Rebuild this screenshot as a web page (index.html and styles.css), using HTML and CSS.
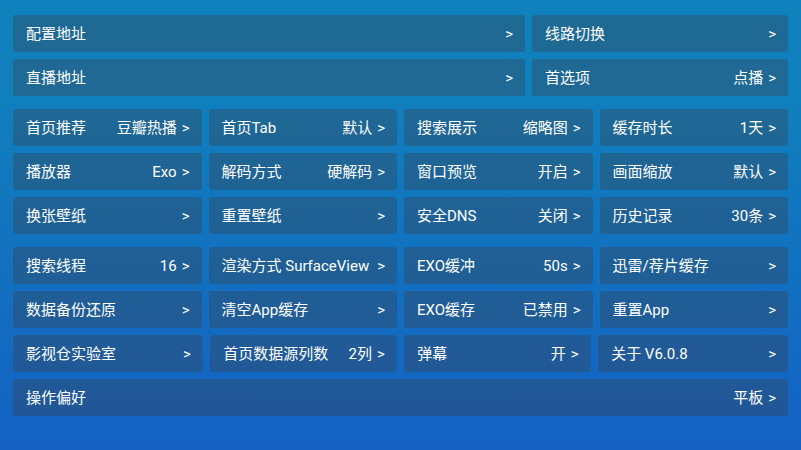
FILE: index.html
```html
<!DOCTYPE html>
<html lang="zh-CN">
<head>
<meta charset="utf-8">
<title>设置</title>
<link rel="stylesheet" href="styles.css">
</head>
<body>
<div class="page">
  <section class="group">
    <div class="row row-split">
      <div class="card"><span class="label">配置地址</span><span class="value"><span class="arrow">&gt;</span></span></div>
      <div class="card"><span class="label">线路切换</span><span class="value"><span class="arrow">&gt;</span></span></div>
    </div>
    <div class="row row-split">
      <div class="card"><span class="label">直播地址</span><span class="value"><span class="arrow">&gt;</span></span></div>
      <div class="card"><span class="label">首选项</span><span class="value">点播<span class="arrow">&gt;</span></span></div>
    </div>
  </section>
  <section class="group">
    <div class="row row-quad">
      <div class="card"><span class="label">首页推荐</span><span class="value">豆瓣热播<span class="arrow">&gt;</span></span></div>
      <div class="card"><span class="label">首页Tab</span><span class="value">默认<span class="arrow">&gt;</span></span></div>
      <div class="card"><span class="label">搜索展示</span><span class="value">缩略图<span class="arrow">&gt;</span></span></div>
      <div class="card"><span class="label">缓存时长</span><span class="value">1天<span class="arrow">&gt;</span></span></div>
    </div>
    <div class="row row-quad">
      <div class="card"><span class="label">播放器</span><span class="value">Exo<span class="arrow">&gt;</span></span></div>
      <div class="card"><span class="label">解码方式</span><span class="value">硬解码<span class="arrow">&gt;</span></span></div>
      <div class="card"><span class="label">窗口预览</span><span class="value">开启<span class="arrow">&gt;</span></span></div>
      <div class="card"><span class="label">画面缩放</span><span class="value">默认<span class="arrow">&gt;</span></span></div>
    </div>
    <div class="row row-quad">
      <div class="card"><span class="label">换张壁纸</span><span class="value"><span class="arrow">&gt;</span></span></div>
      <div class="card"><span class="label">重置壁纸</span><span class="value"><span class="arrow">&gt;</span></span></div>
      <div class="card"><span class="label">安全DNS</span><span class="value">关闭<span class="arrow">&gt;</span></span></div>
      <div class="card"><span class="label">历史记录</span><span class="value">30条<span class="arrow">&gt;</span></span></div>
    </div>
  </section>
  <section class="group">
    <div class="row row-quad">
      <div class="card"><span class="label">搜索线程</span><span class="value">16<span class="arrow">&gt;</span></span></div>
      <div class="card"><span class="label">渲染方式 SurfaceView</span><span class="value"><span class="arrow">&gt;</span></span></div>
      <div class="card"><span class="label">EXO缓冲</span><span class="value">50s<span class="arrow">&gt;</span></span></div>
      <div class="card"><span class="label">迅雷/荐片缓存</span><span class="value"><span class="arrow">&gt;</span></span></div>
    </div>
    <div class="row row-quad">
      <div class="card"><span class="label">数据备份还原</span><span class="value"><span class="arrow">&gt;</span></span></div>
      <div class="card"><span class="label">清空App缓存</span><span class="value"><span class="arrow">&gt;</span></span></div>
      <div class="card"><span class="label">EXO缓存</span><span class="value">已禁用<span class="arrow">&gt;</span></span></div>
      <div class="card"><span class="label">重置App</span><span class="value"><span class="arrow">&gt;</span></span></div>
    </div>
    <div class="row row-loose">
      <div class="card"><span class="label">影视仓实验室</span><span class="value"><span class="arrow">&gt;</span></span></div>
      <div class="card"><span class="label">首页数据源列数</span><span class="value">2列<span class="arrow">&gt;</span></span></div>
      <div class="card"><span class="label">弹幕</span><span class="value">开<span class="arrow">&gt;</span></span></div>
      <div class="card"><span class="label">关于 V6.0.8</span><span class="value"><span class="arrow">&gt;</span></span></div>
    </div>
    <div class="row row-full">
      <div class="card"><span class="label">操作偏好</span><span class="value">平板<span class="arrow">&gt;</span></span></div>
    </div>
  </section>
</div>
</body>
</html>
```

FILE: styles.css
```css
html, body {
  margin: 0;
  padding: 0;
}

body {
  width: 801px;
  height: 450px;
  overflow: hidden;
  background: linear-gradient(180deg, #0f82bd 0%, #1080bd 20%, #1461c3 100%);
  font-family: Roboto, "Noto Sans CJK SC", sans-serif;
  font-size: 15px;
  color: #ffffff;
}

.page {
  display: flex;
  flex-direction: column;
  gap: 13px;
  padding: 15px 13px 0 13px;
}

.group {
  display: flex;
  flex-direction: column;
  gap: 7px;
}

.row {
  display: grid;
  gap: 7px;
}

.row-split {
  grid-template-columns: 2fr 1fr;
}

.row-quad {
  grid-template-columns: repeat(4, 1fr);
}

.row-loose {
  gap: 7.5px;
  grid-template-columns: 190fr 186.5fr 186.5fr 190fr;
}

.row-full {
  grid-template-columns: 1fr;
}

.card {
  min-width: 0;
  height: 37px;
  box-sizing: border-box;
  display: flex;
  align-items: center;
  justify-content: space-between;
  padding: 0 12px 0 13px;
  border-radius: 3px;
  background: rgba(58, 64, 74, 0.36);
  white-space: nowrap;
}

.label,
.value {
  line-height: 20px;
}

.value {
  display: flex;
  align-items: center;
}

.arrow {
  margin-left: 5px;
}
```
